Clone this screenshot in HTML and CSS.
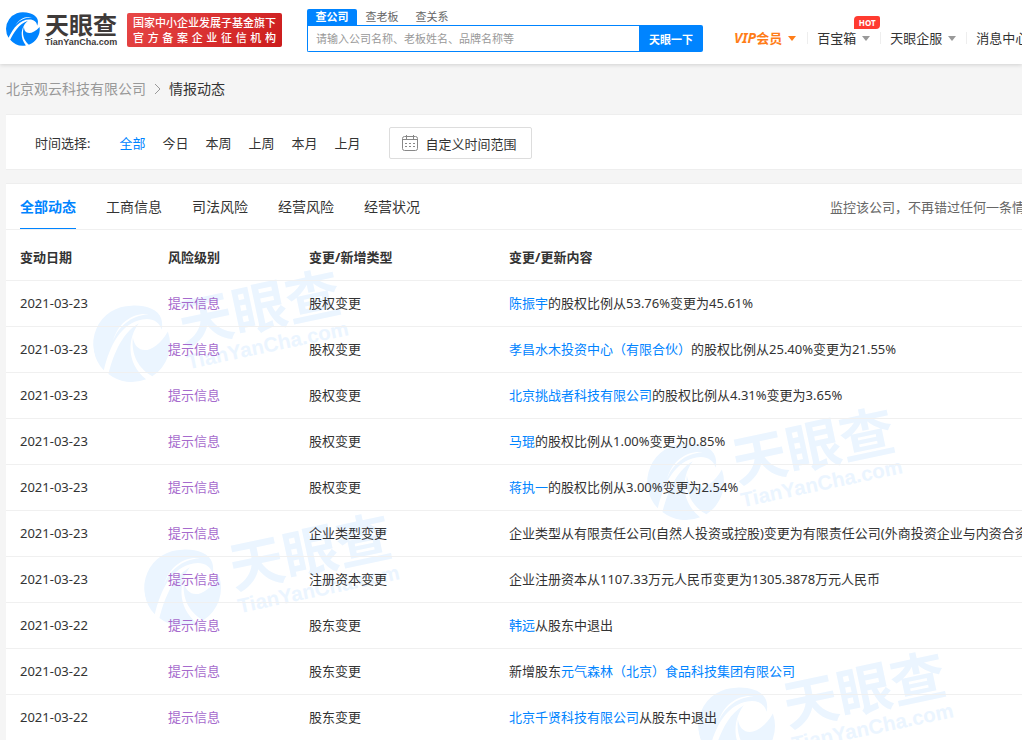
FILE: index.html
```html
<!DOCTYPE html>
<html lang="zh-CN">
<head>
    <meta charset="UTF-8">
    <meta name="viewport" content="width=device-width, initial-scale=1.0">
    <title>情报动态 - 天眼查</title>
    <link rel="stylesheet" href="styles.css">
</head>
<body>
    <!-- logo, shared with the watermark -->
    <svg class="defs" aria-hidden="true">
        <symbol id="logo" viewBox="0 0 114 36">
            <g transform="translate(17 18) rotate(12) scale(.145) translate(-145 -256)">
                <path d="M60 336A116 116 0 0 1 145 140C185 138 225 150 234 180C238 195 237 204 235 213C228 187 204 176 176 182C112 194 78 260 60 336Z"/>
                <path d="M74 347C86 300 110 225 166 193C134 235 124 310 188 363A116 116 0 0 1 74 347Z"/>
                <path d="M148 236C156 290 212 290 254 218A116 116 0 0 1 207 354C166 332 142 290 148 236Z"/>
                <path d="M88 246C104 205 140 170 196 166C150 160 104 190 88 246Z" fill="#fff"/>
            </g>
            <g class="logo-text">
                <text x="39" y="23" class="logo-cn">天眼查</text>
                <text x="39" y="34" class="logo-en">TianYanCha.com</text>
            </g>
        </symbol>
    </svg>

    <header class="header">
        <a class="brand" href="#" aria-label="天眼查"><svg class="logo"><use href="#logo"/></svg></a>
        <div class="slogan">
            <p>国家中小企业发展子基金旗下</p>
            <p>官方备案企业征信机构</p>
        </div>
        <form class="search">
            <div class="search-tabs">
                <button type="button" class="active">查公司</button>
                <button type="button">查老板</button>
                <button type="button">查关系</button>
            </div>
            <div class="search-box">
                <input type="text" aria-label="搜索" placeholder="请输入公司名称、老板姓名、品牌名称等">
                <button type="submit">天眼一下</button>
            </div>
        </form>
        <nav class="nav">
            <a class="vip" href="#"><i>VIP</i>会员<span class="arrow"></span></a>
            <a href="#">百宝箱<span class="arrow"></span><span class="hot">HOT</span></a>
            <a href="#">天眼企服<span class="arrow"></span></a>
            <a href="#">消息中心</a>
        </nav>
    </header>

    <main class="page">
        <div class="crumbs">
            <a href="#">北京观云科技有限公司</a>
            <svg width="7" height="12" viewBox="0 0 7 12"><path d="M1 1l5 5-5 5" fill="none" stroke="#999"/></svg>
            <span>情报动态</span>
        </div>

        <section class="card filter">
            <span class="filter-label">时间选择:</span>
            <a class="active" href="#">全部</a>
            <a href="#">今日</a>
            <a href="#">本周</a>
            <a href="#">上周</a>
            <a href="#">本月</a>
            <a href="#">上月</a>
            <button type="button" class="range">
                <svg width="16" height="16" viewBox="0 0 16 16" fill="none" stroke="#888"><rect x=".5" y="1.5" width="15" height="14" rx="2"/><path d="M4.500 0v4M11.500 0v4M1 4.500h14"/><path d="M3 8.500h10M3 11.500h10" stroke-dasharray="2 2"/></svg>
                自定义时间范围
            </button>
        </section>

        <section class="card list">
            <div class="tabs">
                <a class="active" href="#">全部动态</a>
                <a href="#">工商信息</a>
                <a href="#">司法风险</a>
                <a href="#">经营风险</a>
                <a href="#">经营状况</a>
                <span class="notice">监控该公司，不再错过任何一条情报</span>
            </div>
            <div class="marks" aria-hidden="true">
                <svg class="mark mark-1"><use href="#logo"/></svg>
                <svg class="mark mark-2"><use href="#logo"/></svg>
                <svg class="mark mark-3"><use href="#logo"/></svg>
                <svg class="mark mark-4"><use href="#logo"/></svg>
            </div>
            <table>
                <thead>
                    <tr><th class="col-date">变动日期</th><th class="col-level">风险级别</th><th class="col-type">变更/新增类型</th><th>变更/更新内容</th></tr>
                </thead>
                <tbody>
                    <tr><td>2021-03-23</td><td class="level">提示信息</td><td>股权变更</td><td><a href="#">陈振宇</a>的股权比例从53.76%变更为45.61%</td></tr>
                    <tr><td>2021-03-23</td><td class="level">提示信息</td><td>股权变更</td><td><a href="#">孝昌水木投资中心（有限合伙）</a>的股权比例从25.40%变更为21.55%</td></tr>
                    <tr><td>2021-03-23</td><td class="level">提示信息</td><td>股权变更</td><td><a href="#">北京挑战者科技有限公司</a>的股权比例从4.31%变更为3.65%</td></tr>
                    <tr><td>2021-03-23</td><td class="level">提示信息</td><td>股权变更</td><td><a href="#">马琨</a>的股权比例从1.00%变更为0.85%</td></tr>
                    <tr><td>2021-03-23</td><td class="level">提示信息</td><td>股权变更</td><td><a href="#">蒋执一</a>的股权比例从3.00%变更为2.54%</td></tr>
                    <tr><td>2021-03-23</td><td class="level">提示信息</td><td>企业类型变更</td><td>企业类型从有限责任公司(自然人投资或控股)变更为有限责任公司(外商投资企业与内资合资)</td></tr>
                    <tr><td>2021-03-23</td><td class="level">提示信息</td><td>注册资本变更</td><td>企业注册资本从1107.33万元人民币变更为1305.3878万元人民币</td></tr>
                    <tr><td>2021-03-22</td><td class="level">提示信息</td><td>股东变更</td><td><a href="#">韩远</a>从股东中退出</td></tr>
                    <tr><td>2021-03-22</td><td class="level">提示信息</td><td>股东变更</td><td>新增股东<a href="#">元气森林（北京）食品科技集团有限公司</a></td></tr>
                    <tr><td>2021-03-22</td><td class="level">提示信息</td><td>股东变更</td><td><a href="#">北京千贤科技有限公司</a>从股东中退出</td></tr>
                </tbody>
            </table>
        </section>
    </main>
</body>
</html>
```
FILE: styles.css
```css
* { box-sizing: border-box; }
html { overflow-x: hidden; }
body {
    margin: 0;
    background: #f5f5f5;
    color: #333;
    font: 13px/20px "Noto Sans", "Noto Sans CJK SC", sans-serif;
    white-space: nowrap;
    overflow: hidden;
}
a { color: inherit; text-decoration: none; }
button, input { font-family: inherit; border: none; padding: 0; }
button { cursor: pointer; }
p { margin: 0; }
.defs { position: absolute; width: 0; height: 0; }

/* header */
.header {
    display: flex;
    align-items: flex-start;
    height: 64px;
    padding-left: 6px;
    background: #fff;
    box-shadow: 0 1px 4px rgba(0, 0, 0, .15);
}
.brand { margin-top: 11px; flex: none; }
.logo { display: block; width: 114px; height: 36px; fill: #0084ff; }
.logo-text { fill: var(--text, #3e3a39); }
.logo-cn { font: 700 24px/24px "Noto Sans CJK SC", sans-serif; }
.logo-en { font: 700 9px/9px "Liberation Sans", sans-serif; }
.slogan {
    flex: none;
    width: 155px;
    height: 34px;
    margin: 13px 25px 0 7px;
    padding: 2px 6px;
    border-radius: 2px;
    background: linear-gradient(135deg, #e84848, #cb1b1b);
    color: #fff;
    font-size: 11px;
    font-weight: 500;
    line-height: 15px;
}
.slogan p { text-align: justify; text-align-last: justify; }

.search { flex: none; width: 396px; margin-top: 9px; }
.search-tabs { display: flex; }
.search-tabs button {
    height: 16px;
    width: 50px;
    background: none;
    color: #666;
    font-size: 11px;
    line-height: 16px;
}
.search-tabs .active { background: #0084ff; color: #fff; font-weight: 700; border-radius: 2px 2px 0 0; }
.search-box { display: flex; height: 27px; }
.search-box input {
    flex: 1;
    min-width: 0;
    padding: 0 8px;
    border: 1px solid #0084ff;
    border-right: none;
    border-radius: 0 0 0 2px;
    font-size: 11px;
    outline: none;
}
.search-box input::placeholder { color: #999; }
.search-box button {
    width: 64px;
    background: #0084ff;
    color: #fff;
    font-size: 11px;
    font-weight: 700;
    border-radius: 0 2px 2px 0;
}

.nav { display: flex; margin: 28px 0 0 21px; }
.nav a { position: relative; display: flex; align-items: center; flex: none; padding: 0 10px; }
.nav a + a::before { content: ""; position: absolute; left: 0; width: 1px; height: 12px; background: #eee; }
.nav .vip { color: #ff7d18; font-weight: 700; }
.vip i { font-size: 14px; }
.arrow { margin-left: 6px; border: 4px solid transparent; border-top: 5px solid #999; border-bottom: none; }
.nav .vip { padding-right: 11px; }
.vip .arrow { border-top-color: #ff7d18; }
.hot {
    position: absolute;
    top: -12px;
    right: 0;
    width: 26px;
    height: 13px;
    border-radius: 4px 2px 4px 0;
    background: #ff3b30;
    color: #fff;
    font-size: 8px;
    font-weight: 700;
    line-height: 13px;
    text-align: center;
}

/* page */
.page { min-width: 1054px; padding-left: 6px; }
.crumbs { display: flex; align-items: center; gap: 8px; height: 50px; font-size: 14px; }
.crumbs a { color: #999; }
.card { background: #fff; border: solid #eee; border-width: 1px 0; }

.filter { display: flex; align-items: center; gap: 17px; height: 56px; padding: 2px 0 0 29px; margin-bottom: 13px; }
.filter-label { margin-right: 12px; }
.filter .active { color: #0084ff; }
.range {
    display: flex;
    align-items: center;
    gap: 8px;
    height: 32px;
    margin-left: 11px;
    padding: 0 14px 0 12px;
    border: 1px solid #ddd;
    border-radius: 2px;
    background: #fff;
    color: #333;
    font-size: 13px;
}

.list { position: relative; z-index: 0; }
.tabs { display: flex; gap: 30px; height: 46px; padding: 0 16px 0 14px; border-bottom: 1px solid #f0f0f0; font-size: 14px; line-height: 46px; }
.tabs a { height: 45px; }
.tabs .active { color: #0084ff; font-weight: 700; border-bottom: 1px solid #0084ff; }
.notice { margin-left: auto; color: #666; font-size: 13px; }

table { width: 100%; border-collapse: collapse; table-layout: fixed; }
th, td { height: 46px; padding: 0 0 0 14px; border-bottom: 1px solid #f0f0f0; text-align: left; }
th { height: 50px; padding-top: 4px; }
.col-date { width: 148px; }
.col-level { width: 141px; }
.col-type { width: 200px; }
td a { color: #0084ff; }
.level { color: #a66bcd; }

/* watermark */
.marks { position: absolute; inset: 0; z-index: -1; overflow: hidden; }
.mark {
    --text: #ebf5ff;
    position: absolute;
    width: 260px;
    height: 82px;
    fill: #ebf5ff;
    transform: rotate(-12deg);
}
.mark-1 { left: 85px; top: 100px; }
.mark-2 { left: 639px; top: 238px; }
.mark-3 { left: 136px; top: 344px; }
.mark-4 { left: 690px; top: 482px; }
```
